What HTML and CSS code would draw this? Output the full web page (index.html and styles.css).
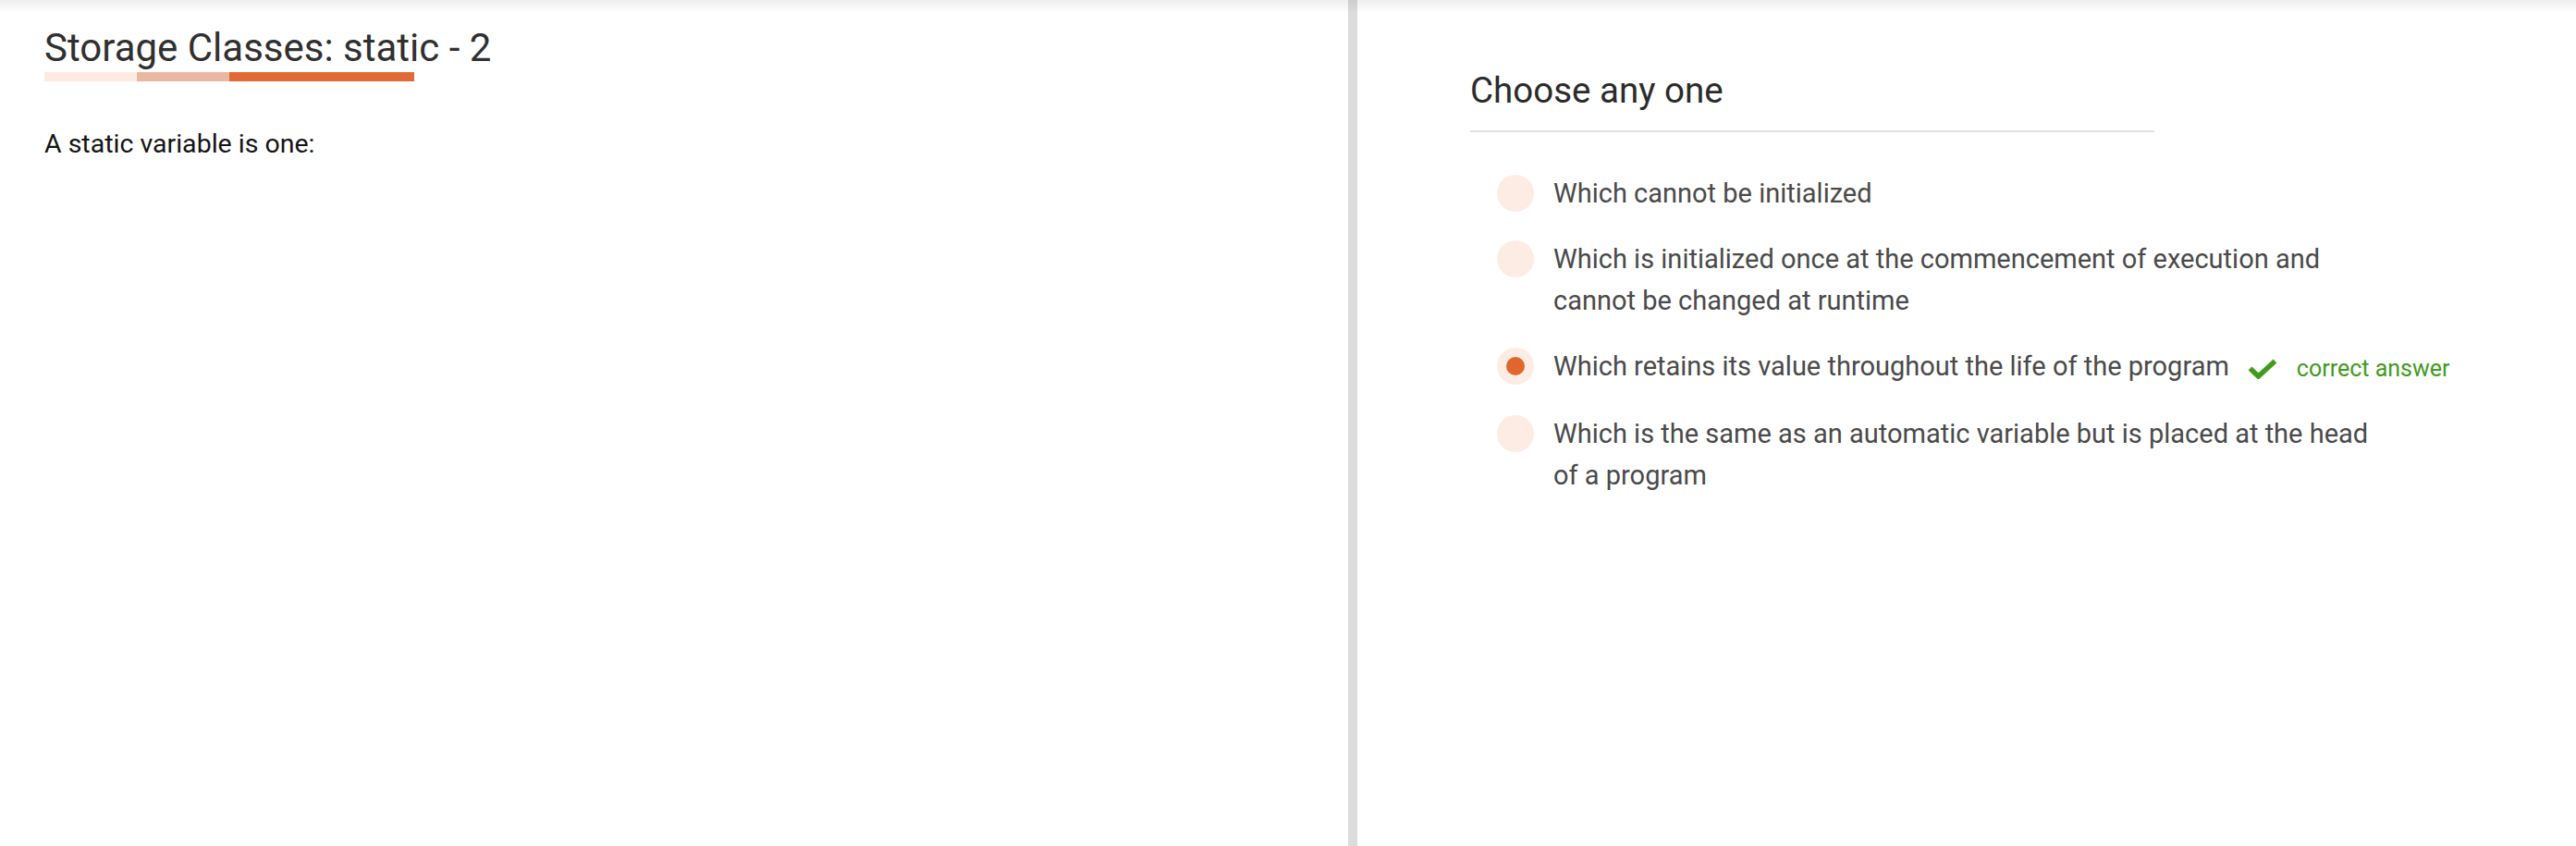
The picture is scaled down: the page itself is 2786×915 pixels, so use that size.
FILE: index.html
```html
<!DOCTYPE html>
<html lang="en">
<head>
<meta charset="utf-8">
<title>Storage Classes: static - 2</title>
<link rel="stylesheet" href="styles.css">
</head>
<body>
<div class="page">
  <section class="question">
    <h1 class="q-title">Storage Classes: static - 2</h1>
    <div class="progress">
      <span class="seg seg-light"></span>
      <span class="seg seg-mid"></span>
      <span class="seg seg-strong"></span>
    </div>
    <p class="q-text">A static variable is one:</p>
  </section>
  <section class="answers">
    <h2 class="a-title">Choose any one</h2>
    <ul class="options">
      <li class="option">
        <span class="radio"></span>
        <span class="label">Which cannot be initialized</span>
      </li>
      <li class="option">
        <span class="radio"></span>
        <span class="label">Which is initialized once at the commencement of execution and cannot be changed at runtime</span>
      </li>
      <li class="option">
        <span class="radio radio-on"><span class="dot"></span></span>
        <span class="label">Which retains its value throughout the life of the program</span>
        <span class="result">
          <svg class="check" viewBox="0 0 32 22" width="32" height="22"><polyline points="2.5,10.5 11.5,19 29.5,2.5" fill="none" stroke="#3f9c1c" stroke-width="5.5" stroke-linejoin="miter"/></svg>
          <span class="result-text">correct answer</span>
        </span>
      </li>
      <li class="option">
        <span class="radio"></span>
        <span class="label">Which is the same as an automatic variable but is placed at the head of a program</span>
      </li>
    </ul>
  </section>
</div>
</body>
</html>
```
FILE: styles.css
```css
html, body {
  margin: 0;
  padding: 0;
  background: #ffffff;
}
body {
  font-family: Roboto, "Open Sans", sans-serif;
}
.page {
  display: flex;
  height: 100vh;
  min-height: 915px;
  box-sizing: border-box;
}
.page::before {
  content: "";
  position: fixed;
  top: 0;
  left: 0;
  right: 0;
  height: 14px;
  background: linear-gradient(to bottom, rgba(0,0,0,0.065), rgba(0,0,0,0));
  pointer-events: none;
  z-index: 5;
}
.question {
  width: 1458px;
  flex: none;
  box-sizing: border-box;
  padding: 27px 0 0 48px;
}
.q-title {
  margin: 0;
  font-size: 42px;
  line-height: 50px;
  font-weight: 400;
  color: #303030;
}
.progress {
  display: flex;
  margin-top: 1px;
  height: 10px;
}
.seg {
  display: block;
  height: 10px;
}
.seg-light { width: 100px; background: #fdebe3; }
.seg-mid { width: 100px; background: #e8b9a0; }
.seg-strong { width: 200px; background: #e06a35; }
.q-text {
  margin: 48px 0 0;
  font-size: 28.5px;
  line-height: 40px;
  color: #141414;
}
.answers {
  flex: 1;
  border-left: 10px solid #dcdcdc;
  box-sizing: border-box;
  padding: 75px 0 0 122px;
}
.a-title {
  margin: 0;
  width: 740px;
  font-size: 38.5px;
  line-height: 46px;
  font-weight: 400;
  color: #2b2b2b;
  padding-bottom: 20px;
  border-bottom: 2px solid #e0e0e0;
}
.options {
  list-style: none;
  margin: 44px 0 0;
  padding: 0 0 0 29px;
  display: flex;
  flex-direction: column;
  gap: 26px;
}
.option {
  display: flex;
  align-items: flex-start;
}
.radio {
  flex: none;
  width: 40px;
  height: 40px;
  margin-top: 2px;
  border-radius: 50%;
  background: #fdece4;
  display: flex;
  align-items: center;
  justify-content: center;
}
.dot {
  width: 20px;
  height: 20px;
  border-radius: 50%;
  background: #e0662f;
}
.label {
  margin-left: 21px;
  max-width: 895px;
  font-size: 29px;
  line-height: 45px;
  color: #4a4a4a;
}
.result {
  display: flex;
  align-items: center;
  margin-left: 20px;
  height: 45px;
  margin-top: 2px;
}
.check {
  display: block;
}
.result-text {
  margin-left: 21px;
  font-size: 25px;
  line-height: 30px;
  color: #3f9c1c;
}
```
